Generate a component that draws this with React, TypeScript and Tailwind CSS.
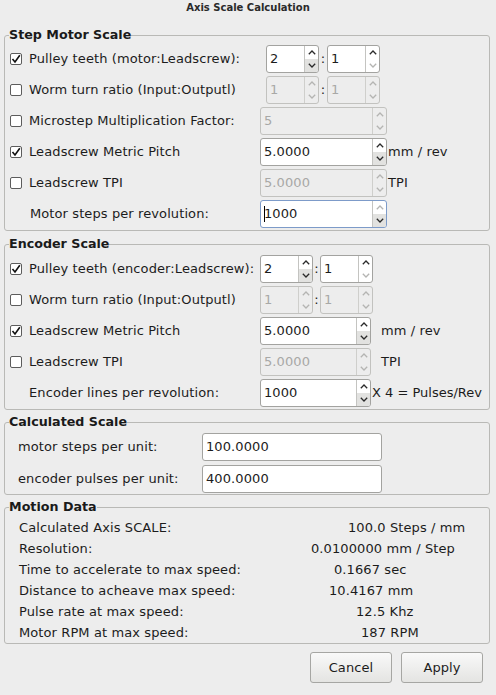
import clsx from 'clsx';
import type { ReactNode } from 'react';

function Chevron({ up, on }: { up?: boolean; on: boolean }) {
  return (
    <svg width="8" height="5" viewBox="0 0 8 5" className="block">
      <polyline
        points={up ? '0.8,4.2 4,1 7.2,4.2' : '0.8,0.8 4,4 7.2,0.8'}
        fill="none"
        stroke={on ? '#2a2a2a' : '#b4b4b2'}
        strokeWidth="1.3"
      />
    </svg>
  );
}

function Check({ checked }: { checked?: boolean }) {
  return (
    <div className="w-[12px] h-[12px] shrink-0 rounded-[2px] border border-[#5c5c5c] bg-white flex items-center justify-center">
      {checked ? (
        <svg width="10" height="10" viewBox="0 0 10 10">
          <polyline points="1.5,5 4,8 8.8,1.2" fill="none" stroke="#111" strokeWidth="1.6" />
        </svg>
      ) : null}
    </div>
  );
}

type SpinProps = {
  value: string;
  w: string;
  disabled?: boolean;
  focused?: boolean;
  upOn?: boolean;
  downOn?: boolean;
};

function Spin({ value, w, disabled, focused, upOn = true, downOn = true }: SpinProps) {
  const up = !disabled && upOn;
  const down = !disabled && downOn;
  return (
    <div
      className={clsx(
        'flex h-[28px] shrink-0 rounded-[3px] border overflow-hidden',
        w,
        disabled
          ? 'bg-[#ededed] border-[#c2c2bf] text-[#a8a8a6]'
          : 'bg-white text-[#1c1c1c]',
        !disabled && (focused ? 'border-[#7d9bc9]' : 'border-[#a3a3a0]')
      )}
    >
      <div className="flex-1 flex items-center pl-[3px] overflow-hidden whitespace-nowrap">
        {focused ? <span className="w-px h-[16px] bg-black mr-[-1px]" /> : null}
        {value}
      </div>
      <div
        className={clsx(
          'w-[14px] flex flex-col border-l',
          disabled ? 'border-[#cfcfcc]' : 'border-[#c4c4c1]'
        )}
      >
        <div className="flex-1 flex items-center justify-center">
          <Chevron up on={up} />
        </div>
        <div
          className={clsx(
            'flex-1 flex items-center justify-center',
            down ? 'bg-[#e2e2e0]' : ''
          )}
        >
          <Chevron on={down} />
        </div>
      </div>
    </div>
  );
}

function Group({ title, className, children }: { title: string; className: string; children: ReactNode }) {
  return (
    <fieldset
      className={clsx(
        'ml-[4px] mr-[6px] border border-[#b9b9b6] rounded-[3px] px-[5px] min-w-0',
        className
      )}
    >
      <legend className="p-0 ml-[-1px] text-[12.7px] leading-[16px] font-bold tracking-normal text-[#1a1a1a]">
        {title}
      </legend>
      {children}
    </fieldset>
  );
}

function Row({ check, label, children, labelPad }: { check?: 'on' | 'off'; label: string; children: ReactNode; labelPad?: string }) {
  return (
    <div className="flex items-center h-[28px]">
      <div className={clsx('w-[250px] flex items-center shrink-0', labelPad)}>
        {check ? <Check checked={check === 'on'} /> : null}
        <span className={clsx('whitespace-nowrap', check ? 'ml-[7px]' : '')}>{label}</span>
      </div>
      {children}
    </div>
  );
}

function Colon({ w }: { w: string }) {
  return <span className={clsx('text-center text-[#1c1c1c]', w)}>:</span>;
}

const motion = [
  { label: 'Calculated Axis SCALE:', value: '100.0 Steps / mm', pad: 'pl-[37px]' },
  { label: 'Resolution:', value: '0.0100000 mm / Step', pad: 'pl-[0px]' },
  { label: 'Time to accelerate to max speed:', value: '0.1667 sec', pad: 'pl-[23px]' },
  { label: 'Distance to acheave max speed:', value: '10.4167 mm', pad: 'pl-[18px]' },
  { label: 'Pulse rate at max speed:', value: '12.5 Khz', pad: 'pl-[45px]' },
  { label: 'Motor RPM at max speed:', value: '187 RPM', pad: 'pl-[50px]' },
];

export default function App() {
  return (
    <div className="w-[496px] h-[695px] bg-[#ededed] text-[#1c1c1c] text-[13px] leading-[16px] tracking-[0.1px] font-['DejaVu_Sans',sans-serif] overflow-hidden">
      <div className="h-[16px] text-center text-[10px] font-bold leading-[16px] tracking-normal text-[#2a2a2a]">
        Axis Scale Calculation
      </div>

      <Group title="Step Motor Scale" className="mt-[11px] pb-[2px]">
        <div className="mt-[2px] flex flex-col gap-[3px]">
          <Row check="on" label="Pulley teeth (motor:Leadscrew):">
            <div className="flex items-center ml-[6px]">
              <Spin value="2" w="w-[53px]" />
              <Colon w="w-[8px]" />
              <Spin value="1" w="w-[53px]" downOn={false} />
            </div>
          </Row>
          <Row check="off" label="Worm turn ratio (Input:Outputl)">
            <div className="flex items-center ml-[6px]">
              <Spin value="1" w="w-[53px]" disabled />
              <Colon w="w-[8px]" />
              <Spin value="1" w="w-[53px]" disabled />
            </div>
          </Row>
          <Row check="off" label="Microstep Multiplication Factor:">
            <Spin value="5" w="w-[127px]" disabled />
          </Row>
          <Row check="on" label="Leadscrew Metric Pitch">
            <Spin value="5.0000" w="w-[127px]" />
            <span className="ml-[1px] whitespace-nowrap">mm / rev</span>
          </Row>
          <Row check="off" label="Leadscrew TPI">
            <Spin value="5.0000" w="w-[127px]" disabled />
            <span className="ml-[1px]">TPI</span>
          </Row>
          <Row label="Motor steps per revolution:" labelPad="pl-[20px]">
            <Spin value="1000" w="w-[127px]" focused upOn={false} />
          </Row>
        </div>
      </Group>

      <Group title="Encoder Scale" className="mt-[5px] pb-[2px]">
        <div className="mt-[3px] flex flex-col gap-[3px]">
          <Row check="on" label="Pulley teeth (encoder:Leadscrew):">
            <div className="flex items-center">
              <Spin value="2" w="w-[53px]" />
              <Colon w="w-[7px]" />
              <Spin value="1" w="w-[53px]" downOn={false} />
            </div>
          </Row>
          <Row check="off" label="Worm turn ratio (Input:Outputl)">
            <div className="flex items-center">
              <Spin value="1" w="w-[53px]" disabled />
              <Colon w="w-[7px]" />
              <Spin value="1" w="w-[53px]" disabled />
            </div>
          </Row>
          <Row check="on" label="Leadscrew Metric Pitch">
            <Spin value="5.0000" w="w-[111px]" />
            <span className="ml-[10px] whitespace-nowrap">mm / rev</span>
          </Row>
          <Row check="off" label="Leadscrew TPI">
            <Spin value="5.0000" w="w-[111px]" disabled />
            <span className="ml-[10px]">TPI</span>
          </Row>
          <Row label="Encoder lines per revolution:" labelPad="pl-[19px]">
            <Spin value="1000" w="w-[111px]" />
            <span className="ml-[1px] whitespace-nowrap tracking-normal">X 4 = Pulses/Rev</span>
          </Row>
        </div>
      </Group>

      <Group title="Calculated Scale" className="mt-[4px] pb-[1px]">
        <div className="mt-[3px] flex flex-col gap-[4px]">
          {[
            ['motor steps per unit:', '100.0000'],
            ['encoder pulses per unit:', '400.0000'],
          ].map(([label, value]) => (
            <div key={label} className="flex items-center h-[28px]">
              <span className="w-[192px] pl-[8px] whitespace-nowrap">{label}</span>
              <div className="w-[180px] h-[28px] bg-white border border-[#a3a3a0] rounded-[3px] flex items-center pl-[3px]">
                {value}
              </div>
            </div>
          ))}
        </div>
      </Group>

      <Group title="Motion Data" className="mt-[4px] pb-[0px]">
        <div className="mt-[2px] flex flex-col">
          {motion.map((m) => (
            <div key={m.label} className="grid grid-cols-[301px_1fr] h-[21px] items-center">
              <span className="pl-[9px] whitespace-nowrap">{m.label}</span>
              <span className={clsx('whitespace-nowrap', m.pad)}>{m.value}</span>
            </div>
          ))}
        </div>
      </Group>

      <div className="flex justify-end gap-[9px] mt-[8px] pr-[13px]">
        {['Cancel', 'Apply'].map((b) => (
          <button
            key={b}
            className="w-[82px] h-[31px] rounded-[3px] border border-[#a6a6a3] bg-linear-to-b from-[#f9f9f9] to-[#e4e4e2] text-[13px] text-[#1c1c1c]"
          >
            {b}
          </button>
        ))}
      </div>
    </div>
  );
}
